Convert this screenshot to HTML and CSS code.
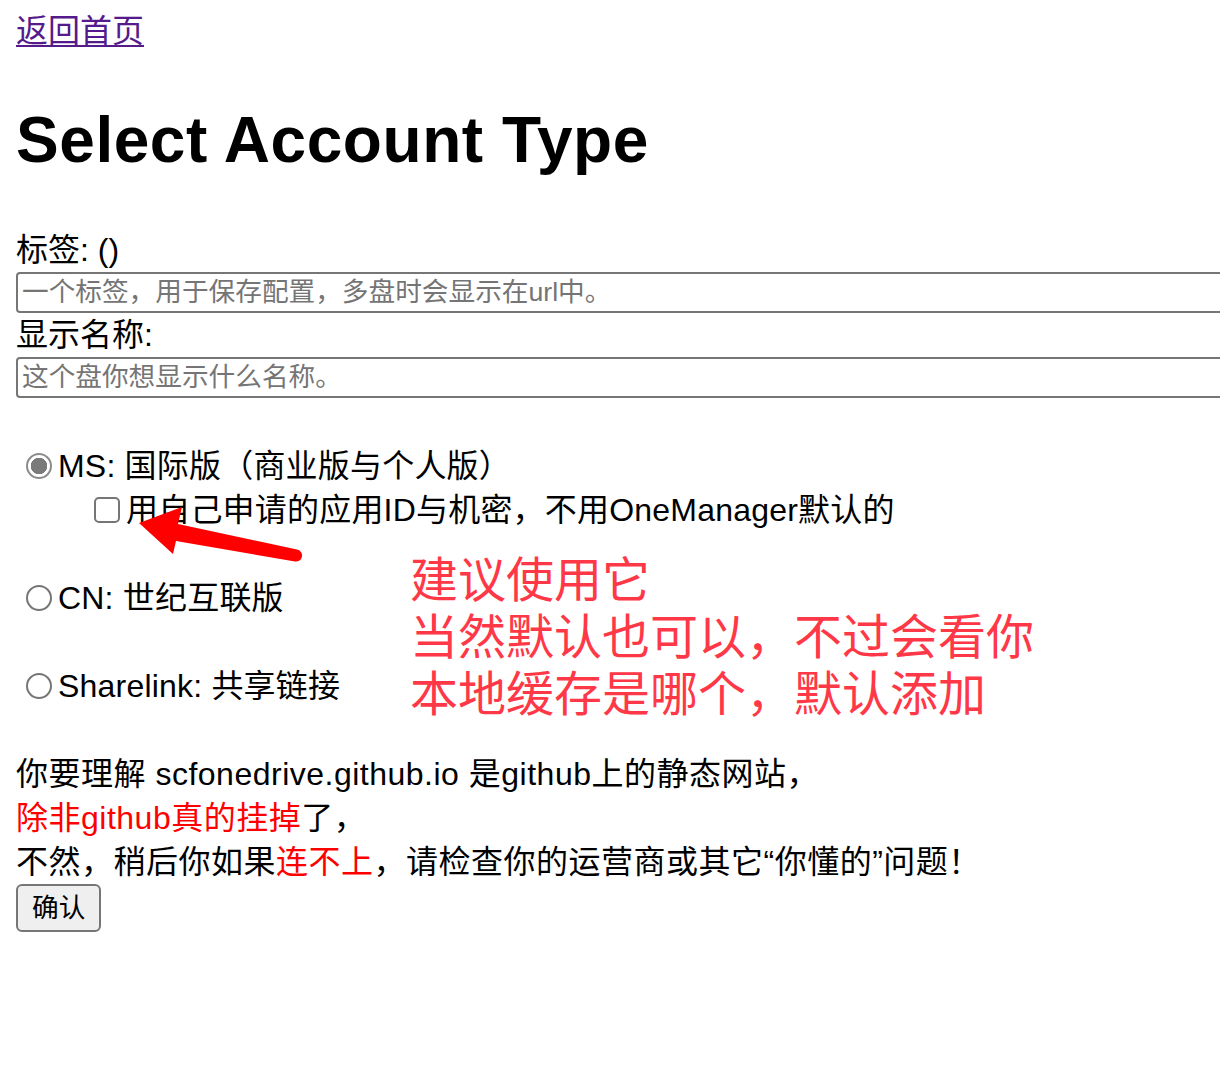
FILE: index.html
```html
<!DOCTYPE html>
<html lang="zh-CN">
<head>
<meta charset="utf-8">
<title>Select Account Type</title>
<link rel="stylesheet" href="styles.css">
</head>
<body>
<div class="page">
  <div class="home-row"><a class="home-link" href="#">返回首页</a></div>
  <h1 class="title">Select Account Type</h1>
  <form class="form" onsubmit="return false;">
    <label class="field-label" for="disktag">标签: ()</label>
    <input class="text-input" id="disktag" type="text" placeholder="一个标签，用于保存配置，多盘时会显示在url中。">
    <label class="field-label" for="diskname">显示名称:</label>
    <input class="text-input" id="diskname" type="text" placeholder="这个盘你想显示什么名称。">

    <div class="options">
      <label class="option"><input class="radio" type="radio" name="drivetype" value="MS" checked>MS: 国际版（商业版与个人版）</label>
      <label class="option option-sub"><input class="check" type="checkbox" name="ownapp">用自己申请的应用ID与机密，不用OneManager默认的</label>
      <label class="option option-spaced"><input class="radio" type="radio" name="drivetype" value="CN">CN: 世纪互联版</label>
      <label class="option option-spaced"><input class="radio" type="radio" name="drivetype" value="Sharelink">Sharelink: 共享链接</label>
    </div>

    <p class="notice">你要理解 scfonedrive.github.io 是github上的静态网站，<br><span class="warn">除非github真的挂掉</span>了，<br>不然，稍后你如果<span class="warn">连不上</span>，请检查你的运营商或其它“你懂的”问题！</p>
    <button class="submit" type="submit">确认</button>
  </form>

  <div class="annotation">
    <div class="annotation-line">建议使用它</div>
    <div class="annotation-line">当然默认也可以，不过会看你</div>
    <div class="annotation-line">本地缓存是哪个，默认添加</div>
  </div>
  <svg class="arrow" viewBox="130 500 180 70" width="180" height="70" aria-hidden="true">
    <path d="M139 523 L182 507 L178 524 L297 549.5 A6 6 0 0 1 295 561.5 L176 541 L173 554 Z" fill="#ff0000"/>
  </svg>
</div>
</body>
</html>
```

FILE: styles.css
```css
html {
  overflow-x: hidden;
}

body {
  margin: 0;
  background: #ffffff;
  color: #000000;
  font-family: "Liberation Sans", "Noto Sans CJK SC", sans-serif;
  font-size: 32px;
}

.page {
  position: relative;
  padding: 16px;
  overflow: hidden;
}

.home-row {
  line-height: 30px;
}

.home-link {
  color: #551a8b;
  text-decoration: underline;
  text-underline-offset: 3px;
  text-decoration-thickness: 2px;
}

.title {
  margin: 57px 0 51px;
  font-size: 64px;
  font-weight: bold;
  line-height: 74px;
  letter-spacing: 0.55px;
}

.form {
  margin: 0;
}

.field-label {
  display: block;
  line-height: 44px;
}

.text-input {
  display: block;
  box-sizing: border-box;
  width: calc(100% + 40px);
  height: 41px;
  margin: 0;
  padding: 0 4px;
  border: 2px solid #767676;
  border-radius: 4px;
  background: #ffffff;
  font-family: "Liberation Sans", "Noto Sans CJK SC", sans-serif;
  font-size: 26.67px;
  color: #000000;
  outline: none;
}

.text-input::placeholder {
  color: #757575;
}

.options {
  margin-top: 46px;
}

.option {
  display: flex;
  align-items: center;
  height: 44px;
  line-height: 44px;
  letter-spacing: 0.2px;
}

.option-sub {
  padding-left: 70px;
}

.option-spaced {
  margin-top: 44px;
}

.radio {
  appearance: none;
  -webkit-appearance: none;
  box-sizing: border-box;
  width: 26px;
  height: 26px;
  margin: 0 6px 0 10px;
  border: 2px solid #767676;
  border-radius: 50%;
  background: #ffffff;
  flex: none;
}

.radio:checked {
  border-color: #8c8c8c;
  background: radial-gradient(circle, #7a7a7a 0 8px, #ffffff 8.5px);
}

.check {
  appearance: none;
  -webkit-appearance: none;
  box-sizing: border-box;
  width: 26px;
  height: 26px;
  margin: 0 6px 0 8px;
  border: 2px solid #767676;
  border-radius: 5px;
  background: #ffffff;
  flex: none;
}

.notice {
  margin: 44px 0 0;
  line-height: 44px;
  letter-spacing: 0.5px;
}

.warn {
  color: #ff0000;
}

.submit {
  display: block;
  box-sizing: border-box;
  height: 48px;
  margin: 0;
  padding: 0 14px;
  border: 2px solid #767676;
  border-radius: 6px;
  background: #efefef;
  color: #000000;
  font-family: "Liberation Sans", "Noto Sans CJK SC", sans-serif;
  font-size: 26.67px;
  line-height: 44px;
}

.annotation {
  position: absolute;
  left: 410px;
  top: 552px;
  font-family: "Liberation Sans", "Noto Sans CJK SC", sans-serif;
  font-size: 48px;
  color: #ff3848;
  white-space: nowrap;
}

.annotation-line {
  height: 57px;
  line-height: 57px;
}

.arrow {
  position: absolute;
  left: 130px;
  top: 500px;
  width: 180px;
  height: 70px;
}
```
